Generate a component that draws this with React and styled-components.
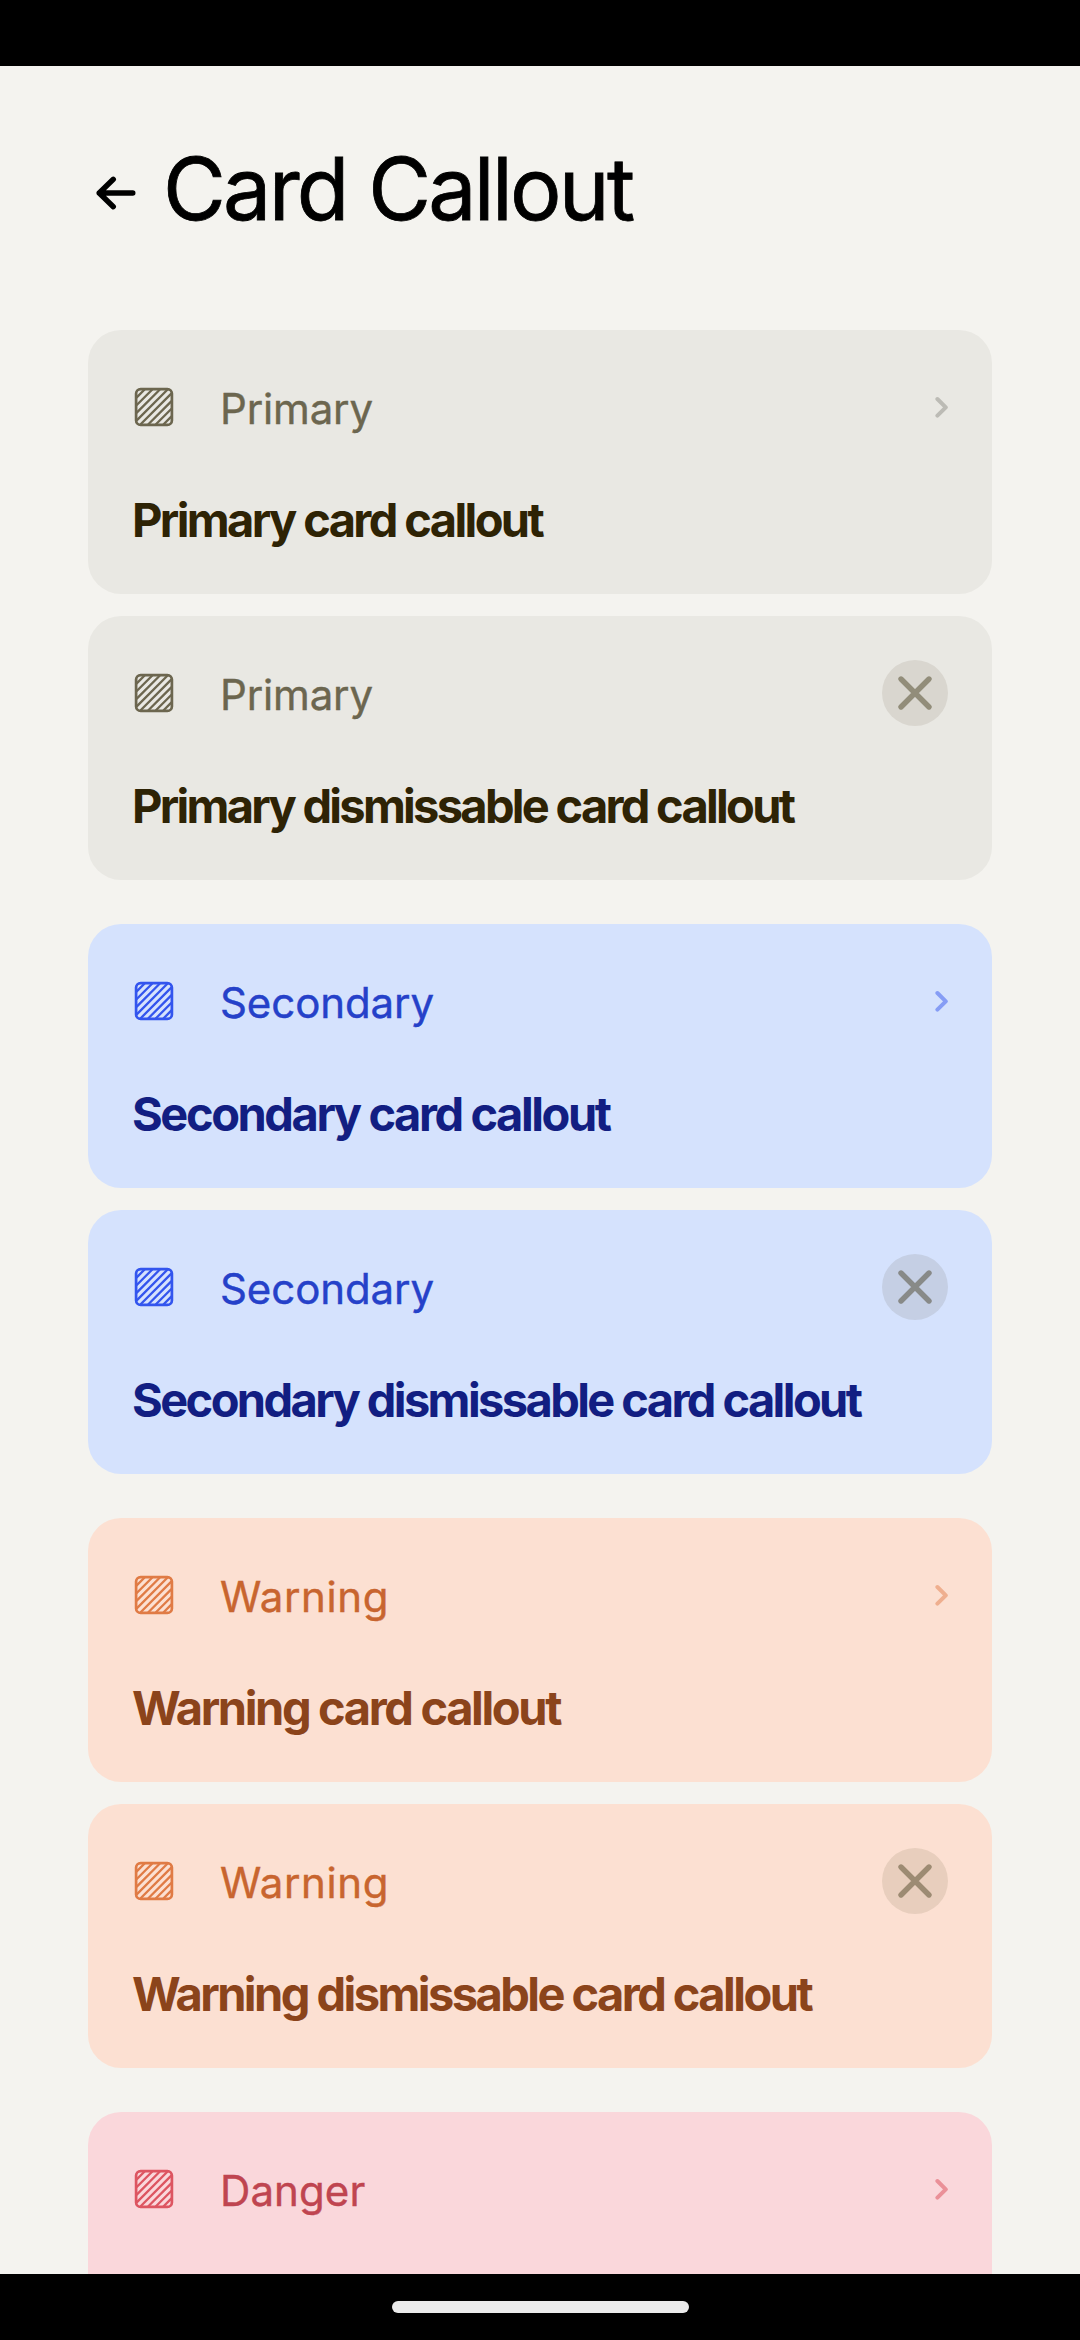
import React from "react";
import styled, { createGlobalStyle } from "styled-components";

const GlobalStyle = createGlobalStyle`
  * { box-sizing: border-box; }
  html, body { margin: 0; padding: 0; background: #000; }
  body { font-family: "Inter", "Liberation Sans", sans-serif; }
`;

const tones = {
  primary: {
    background: "#e9e8e3", icon: "#6c664f", label: "#6c664f", title: "#2e2305",
    chevron: "#bcbbb5", closeFill: "#d9d6cf", closeStroke: "#928d7a",
  },
  secondary: {
    background: "#d5e2fd", icon: "#3355ee", label: "#2541c9", title: "#121e82",
    chevron: "#869df5", closeFill: "#c5cfe4", closeStroke: "#888a88",
  },
  warning: {
    background: "#fce0d2", icon: "#e07b45", label: "#c8652f", title: "#8b441b",
    chevron: "#efaf8f", closeFill: "#e8cebd", closeStroke: "#9d8b73",
  },
  danger: {
    background: "#fad7db", icon: "#dd5561", label: "#bf4550", title: "#7d1f2b",
    chevron: "#ea9098", closeFill: "#e6c6c7", closeStroke: "#9b8478",
  },
};

const sections = [
  {
    tone: "primary", label: "Primary", labelTracking: -0.15,
    cards: [
      { title: "Primary card callout", tracking: -2.62 },
      { title: "Primary dismissable card callout", tracking: -2.72, dismissable: true },
    ],
  },
  {
    tone: "secondary", label: "Secondary", labelTracking: -0.1,
    cards: [
      { title: "Secondary card callout", tracking: -2.43 },
      { title: "Secondary dismissable card callout", tracking: -2.6, dismissable: true },
    ],
  },
  {
    tone: "warning", label: "Warning", labelTracking: 0.6,
    cards: [
      { title: "Warning card callout", tracking: -2.36 },
      { title: "Warning dismissable card callout", tracking: -2.56, dismissable: true },
    ],
  },
  {
    tone: "danger", label: "Danger", labelTracking: 0.1,
    cards: [{ tracking: -2.5 }],
  },
];

const Screen = styled.div`
  display: flex;
  flex-direction: column;
  width: 1080px;
  height: 2340px;
  overflow: hidden;
  background: #000;
`;

const StatusBar = styled.div`
  flex: none;
  height: 66px;
`;

const Content = styled.main`
  flex: 1;
  min-height: 0;
  padding: 0 88px;
  overflow: hidden;
  background: #f4f3ef;
`;

const Header = styled.header`
  display: flex;
  align-items: center;
  gap: 25px;
  height: 264px;
  padding: 71px 0 89px 6px;
`;

const BackButton = styled.button`
  display: flex;
  margin: 8px 0 0;
  padding: 0;
  border: 0;
  background: none;
  color: #000;
`;

const Heading = styled.h1`
  margin: 0;
  font-size: 86px;
  font-weight: 400;
  line-height: 104px;
  letter-spacing: -2.74px;
  white-space: nowrap;
  color: #000;
  -webkit-text-stroke: 0.8px currentColor;
`;

const Sections = styled.div`
  display: flex;
  flex-direction: column;
  gap: 44px;
`;

const Section = styled.section`
  display: flex;
  flex-direction: column;
  gap: 22px;
`;

const Card = styled.article`
  flex: none;
  height: 264px;
  padding: 44px;
  border-radius: 33px;
  background: ${(p) => p.$tone.background};
`;

const CardTop = styled.div`
  display: flex;
  align-items: center;
  height: 66px;
`;

const IconSlot = styled.span`
  display: flex;
  flex: none;
  margin-right: 44px;
  color: ${(p) => p.$tone.icon};
`;

const Label = styled.span`
  flex: 1;
  padding-top: 3px;
  font-size: 42px;
  font-weight: 400;
  line-height: 50px;
  letter-spacing: ${(p) => p.$tracking}px;
  color: ${(p) => p.$tone.label};
  -webkit-text-stroke: 0.4px currentColor;
`;

const CardTitle = styled.h2`
  margin: 50px 0 0;
  font-size: 47px;
  font-weight: 700;
  line-height: 60px;
  letter-spacing: ${(p) => p.$tracking}px;
  white-space: nowrap;
  color: ${(p) => p.$tone.title};
`;

const ChevronSlot = styled.span`
  display: flex;
  color: ${(p) => p.$tone.chevron};
`;

const CloseButton = styled.button`
  display: flex;
  align-items: center;
  justify-content: center;
  width: 66px;
  height: 66px;
  padding: 0;
  border: 0;
  border-radius: 50%;
  background: ${(p) => p.$tone.closeFill};
  color: ${(p) => p.$tone.closeStroke};
`;

const NavigationBar = styled.div`
  display: flex;
  flex: none;
  justify-content: center;
  height: 66px;
  padding-top: 27px;
`;

const HomeHandle = styled.div`
  width: 297px;
  height: 12px;
  border-radius: 6px;
  background: #ebebeb;
`;

function ArrowLeftIcon() {
  return (
    <svg width="44" height="44" viewBox="0 0 44 44" fill="none" stroke="currentColor"
      strokeWidth="5.4" strokeLinecap="round" strokeLinejoin="round">
      <path d="M38.8 22H5.2M19.3 8.3L5.2 22L19.3 35.7" />
    </svg>
  );
}

function HatchedSquareIcon() {
  return (
    <svg width="44" height="44" viewBox="0 0 44 44" fill="none" stroke="currentColor">
      <rect x="4.1" y="4.1" width="35.8" height="35.8" rx="4.5" strokeWidth="2.7" />
      <path
        strokeWidth="2.3"
        d="M4.5 12.6L12.6 4.5M4.5 20.3L20.3 4.5M4.5 27.9L27.9 4.5M4.5 35.6L35.6 4.5M8.4 39.5L39.5 8.4M16.1 39.5L39.5 16.1M23.7 39.5L39.5 23.7M31.4 39.5L39.5 31.4"
      />
    </svg>
  );
}

function ChevronRightIcon() {
  return (
    <svg width="16" height="24" viewBox="0 0 16 24" fill="none" stroke="currentColor"
      strokeWidth="4" strokeLinecap="round" strokeLinejoin="round">
      <path d="M5.4 4L13.8 12.3L5.4 20.6" />
    </svg>
  );
}

function CloseIcon() {
  return (
    <svg width="44" height="44" viewBox="0 0 44 44" fill="none" stroke="currentColor"
      strokeWidth="5.4" strokeLinecap="round">
      <path d="M8 8L36 36M36 8L8 36" />
    </svg>
  );
}

function CardCallout({ tone, label, labelTracking, title, tracking, dismissable }) {
  return (
    <Card $tone={tone}>
      <CardTop>
        <IconSlot $tone={tone}><HatchedSquareIcon /></IconSlot>
        <Label $tone={tone} $tracking={labelTracking}>{label}</Label>
        {dismissable ? (
          <CloseButton $tone={tone}><CloseIcon /></CloseButton>
        ) : (
          <ChevronSlot $tone={tone}><ChevronRightIcon /></ChevronSlot>
        )}
      </CardTop>
      {title && <CardTitle $tone={tone} $tracking={tracking}>{title}</CardTitle>}
    </Card>
  );
}

export default function App() {
  return (
    <>
      <GlobalStyle />
      <Screen>
        <StatusBar />
        <Content>
          <Header>
            <BackButton><ArrowLeftIcon /></BackButton>
            <Heading>Card Callout</Heading>
          </Header>
          <Sections>
            {sections.map((section) => (
              <Section key={section.tone}>
                {section.cards.map((card, index) => (
                  <CardCallout
                    key={index}
                    tone={tones[section.tone]}
                    label={section.label}
                    labelTracking={section.labelTracking}
                    {...card}
                  />
                ))}
              </Section>
            ))}
          </Sections>
        </Content>
        <NavigationBar><HomeHandle /></NavigationBar>
      </Screen>
    </>
  );
}
